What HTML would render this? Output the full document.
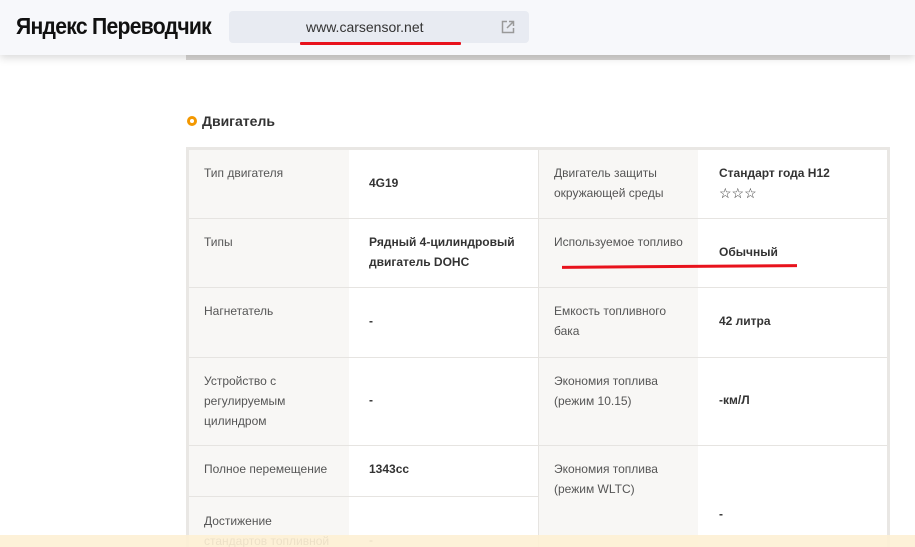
<!DOCTYPE html>
<html style="height:547px;overflow:hidden"><head><meta charset="utf-8"><style>
body{margin:0;width:915px;height:547px;overflow:hidden;background:#fff;font-family:"Liberation Sans",sans-serif;position:relative}
.hdr{position:absolute;left:0;top:0;width:915px;height:55px;background:#f7f8fb;box-shadow:0 3px 8px rgba(0,0,0,.15);z-index:3}
.logo{position:absolute;left:16px;top:13px;font-size:23px;font-weight:bold;color:#111;letter-spacing:-0.8px;transform:scaleX(.92);transform-origin:left}
.url{position:absolute;left:229px;top:11px;width:300px;height:32px;background:#e8ebf2;border-radius:4px}
.url span{position:absolute;left:77px;top:8px;font-size:14px;color:#333}
.band{position:absolute;left:186px;top:50px;width:704px;height:10px;background:#d8d6d4;z-index:2}
.a{position:absolute}
.c{position:absolute;box-sizing:border-box}
.l{background:#f8f7f5}
.t{position:absolute;font-size:12px;color:#555;line-height:20px}
.v{position:absolute;font-size:12px;color:#333;font-weight:bold;line-height:20px}
.hl{position:absolute;height:1px;background:#e6e4e1}
.vl{position:absolute;width:1px;background:#e6e4e1}
</style></head><body>
<div class="hdr"><div class="logo">Яндекс Переводчик</div>
<div class="url"><span>www.carsensor.net</span>
<svg style="position:absolute;left:272px;top:9px" width="14" height="14" viewBox="0 0 14 14" fill="none" stroke="#999" stroke-width="1.5"><path d="M6 1.5H1.5v11h11V8M8 1.5h4.5V6M12.5 1.5L6 8"/></svg></div>
<div style="position:absolute;left:300px;top:42px;width:161px;height:3px;background:#e8121c;border-radius:1px"></div>
</div>
<div class="band"></div>
<div class="a" style="left:187px;top:116px;width:10px;height:10px;border-radius:50%;background:#f39800"></div>
<div class="a" style="left:190px;top:119px;width:4px;height:4px;border-radius:50%;background:#fff"></div>
<div class="a" style="left:202px;top:113px;font-size:14px;font-weight:bold;color:#333">Двигатель</div>
<div class="a" style="left:186px;top:147px;width:704px;height:400px;background:#e9e7e4"></div>
<div class="c" style="left:189px;top:150px;width:698px;height:397px;background:#fff"></div>
<div class="c l" style="left:189px;top:150px;width:160px;height:397px"></div>
<div class="c l" style="left:539px;top:150px;width:159px;height:397px"></div>
<div class="vl" style="left:538px;top:150px;height:397px"></div>
<div class="hl" style="left:189px;top:218px;width:698px"></div>
<div class="hl" style="left:189px;top:287px;width:698px"></div>
<div class="hl" style="left:189px;top:357px;width:698px"></div>
<div class="hl" style="left:189px;top:445px;width:698px"></div>
<div class="hl" style="left:189px;top:496px;width:349px"></div>
<div class="t" style="left:204px;top:163px">Тип двигателя</div>
<div class="v" style="left:369px;top:173px">4G19</div>
<div class="t" style="left:554px;top:163px">Двигатель защиты<br>окружающей среды</div>
<div class="v" style="left:719px;top:163px">Стандарт года H12<br><span style="font-weight:normal;font-size:14px">☆☆☆</span></div>
<div class="t" style="left:204px;top:232px">Типы</div>
<div class="v" style="left:369px;top:232px">Рядный 4-цилиндровый<br>двигатель DOHC</div>
<div class="t" style="left:554px;top:232px">Используемое топливо</div>
<div class="v" style="left:719px;top:242px">Обычный</div>
<div class="a" style="left:562px;top:265px;width:235px;height:3px;background:#e8121c;transform:rotate(-.4deg)"></div>
<div class="t" style="left:204px;top:301px">Нагнетатель</div>
<div class="v" style="left:369px;top:311px">-</div>
<div class="t" style="left:554px;top:301px">Емкость топливного<br>бака</div>
<div class="v" style="left:719px;top:311px">42 литра</div>
<div class="t" style="left:204px;top:371px">Устройство с<br>регулируемым<br>цилиндром</div>
<div class="v" style="left:369px;top:390px">-</div>
<div class="t" style="left:554px;top:371px">Экономия топлива<br>(режим 10.15)</div>
<div class="v" style="left:719px;top:390px">-км/Л</div>
<div class="t" style="left:204px;top:459px">Полное перемещение</div>
<div class="v" style="left:369px;top:459px">1343cc</div>
<div class="t" style="left:554px;top:459px">Экономия топлива<br>(режим WLTC)</div>
<div class="v" style="left:719px;top:504px">-</div>
<div class="t" style="left:204px;top:511px">Достижение<br>стандартов топливной</div>
<div class="v" style="left:369px;top:530px;font-weight:normal">-</div>
<div class="a" style="left:0;top:535px;width:915px;height:12px;background:rgba(253,240,212,.9);z-index:4"></div>
</body></html>
